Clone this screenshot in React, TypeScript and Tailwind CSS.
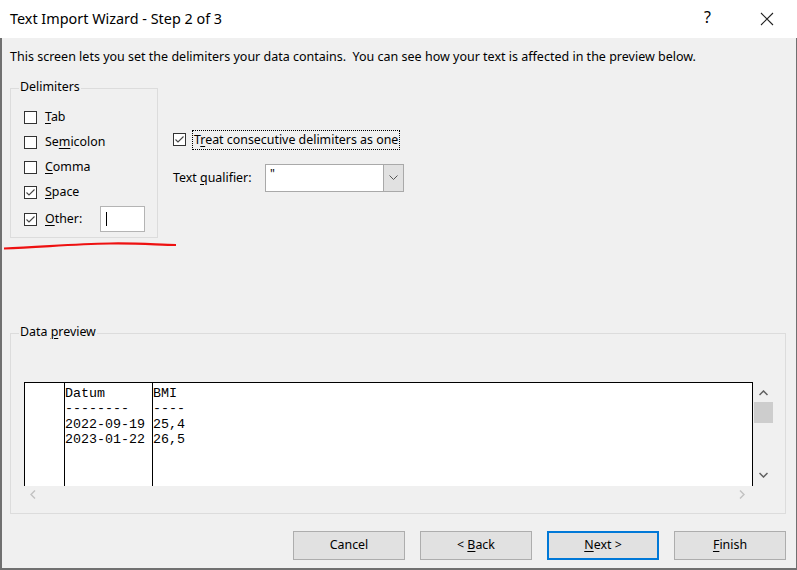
import React from "react";

const UI = { fontFamily: '"Noto Sans", "Open Sans", sans-serif' };
const MONO = { fontFamily: '"Liberation Mono", "Courier New", monospace' };

function Check({ checked }: { checked?: boolean }) {
  return (
    <div className="w-[13px] h-[13px] border border-[#333333] bg-white flex items-center justify-center shrink-0">
      {checked && (
        <svg width="11" height="11" viewBox="0 0 11 11">
          <polyline points="1.5,5.5 4,8 9.5,2.5" fill="none" stroke="#444" strokeWidth="1.1" />
        </svg>
      )}
    </div>
  );
}

function U({ children }: { children: React.ReactNode }) {
  return <span className="underline underline-offset-2 decoration-1">{children}</span>;
}

function CheckRow({ checked, children }: { checked?: boolean; children: React.ReactNode }) {
  return (
    <div className="flex items-center h-[25px]">
      <Check checked={checked} />
      <span className="ml-[8px] text-[12.4px] leading-none text-black">{children}</span>
    </div>
  );
}

function Btn({ children, primary }: { children: React.ReactNode; primary?: boolean }) {
  return (
    <div
      className={
        "w-[112px] h-[29px] bg-[#e1e1e1] flex items-center justify-center text-[12.4px] text-black " +
        (primary ? "border-2 border-[#0078d7]" : "border border-[#adadad]")
      }
    >
      <span className="whitespace-pre">{children}</span>
    </div>
  );
}

export default function App() {
  return (
    <div className="w-[797px] h-[570px] bg-[#f0f0f0] relative overflow-hidden" style={UI}>
      {/* Title bar */}
      <div className="h-[38px] bg-white flex items-center pl-[10px] relative">
        <span className="text-[14.4px] text-black leading-none">Text Import Wizard - Step 2 of 3</span>
        <span className="absolute left-[704px] top-[9px] text-[16px] text-black leading-none">?</span>
        <svg className="absolute left-[760px] top-[12px]" width="14" height="14" viewBox="0 0 14 14">
          <path d="M1 1 L13 13 M13 1 L1 13" stroke="#222" strokeWidth="1.1" />
        </svg>
      </div>

      {/* Body */}
      <div className="h-[532px] border-l-2 border-r border-b-2 border-[#707070] relative">
        <div className="pl-[8px] pt-[13px] text-[12.5px] text-black leading-none whitespace-pre">
          This screen lets you set the delimiters your data contains.  You can see how your text is affected in the preview below.
        </div>

        <div className="flex mt-[21px] ml-[8px]">
          {/* Delimiters group */}
          <div className="relative w-[148px] h-[150px] border border-[#dcdcdc] mt-[3px]">
            <span className="absolute left-[8px] -top-[8px] bg-[#f0f0f0] px-[1px] text-[12.4px] leading-none text-black">
              Delimiters
            </span>
            <div className="pl-[13px] pt-[16px] flex flex-col">
              <CheckRow><U>T</U>ab</CheckRow>
              <CheckRow>Se<U>m</U>icolon</CheckRow>
              <CheckRow><U>C</U>omma</CheckRow>
              <CheckRow checked><U>S</U>pace</CheckRow>
              <div className="flex items-center h-[29px]">
                <Check checked />
                <span className="ml-[8px] text-[12.4px] leading-none text-black w-[55px]"><U>O</U>ther:</span>
                <div className="w-[45px] h-[26px] bg-white border border-[#b4b4b4] flex items-center pl-[5px]">
                  <div className="w-[1px] h-[14px] bg-black" />
                </div>
              </div>
            </div>
          </div>

          {/* Right options */}
          <div className="ml-[15px] pt-[45px] flex flex-col">
            <div className="flex items-center">
              <Check checked />
              <span className="ml-[6px] text-[12.4px] leading-none text-black border border-dotted border-black px-[1px] py-[3px]">
                T<U>r</U>eat consecutive delimiters as one
              </span>
            </div>
            <div className="flex items-center mt-[14px]">
              <span className="text-[12.4px] leading-none text-black w-[92px]">Text <U>q</U>ualifier:</span>
              <div className="w-[139px] h-[28px] bg-white border border-[#a9a9a9] flex">
                <div className="flex-1 pl-[4px] pt-[3px] text-[12px] text-black leading-none">"</div>
                <div className="w-[20px] h-full bg-[#e1e1e1] border-l border-[#a9a9a9] flex items-center justify-center">
                  <svg width="9" height="6" viewBox="0 0 9 6">
                    <polyline points="0.5,0.5 4.5,4.5 8.5,0.5" fill="none" stroke="#555" strokeWidth="1" />
                  </svg>
                </div>
              </div>
            </div>
          </div>
        </div>

        {/* Data preview group */}
        <div className="relative ml-[8px] mt-[95px] w-[776px] h-[181px] border border-[#dcdcdc]">
          <span className="absolute left-[8px] -top-[8px] bg-[#f0f0f0] px-[1px] text-[12.4px] leading-none text-black">
            Data <U>p</U>review
          </span>
          <div className="ml-[13px] mt-[48px] flex">
            <div className="flex flex-col">
              <div className="w-[729px] h-[104px] bg-white border-t border-l border-r border-black flex" style={MONO}>
                <div className="w-[40px] border-r border-black" />
                <div className="w-[88px] border-r border-black text-[13.33px] leading-[15.6px] text-black pt-[3px] whitespace-pre">
                  {"Datum\n--------\n2022-09-19\n2023-01-22"}
                </div>
                <div className="text-[13.33px] leading-[15.6px] text-black pt-[3px] whitespace-pre">
                  {"BMI\n----\n25,4\n26,5"}
                </div>
              </div>
              <div className="h-[18px] flex items-center justify-between px-[6px]">
                <svg width="6" height="9" viewBox="0 0 6 9">
                  <polyline points="5,0.5 1,4.5 5,8.5" fill="none" stroke="#c2c2c2" strokeWidth="1.5" />
                </svg>
                <svg className="mr-[2px]" width="6" height="9" viewBox="0 0 6 9">
                  <polyline points="1,0.5 5,4.5 1,8.5" fill="none" stroke="#c2c2c2" strokeWidth="1.5" />
                </svg>
              </div>
            </div>
            <div className="w-[20px] h-[104px] flex flex-col items-center">
              <div className="h-[20px] flex items-center justify-center pt-[2px]">
                <svg width="9" height="6" viewBox="0 0 9 6">
                  <polyline points="0.5,5 4.5,1 8.5,5" fill="none" stroke="#606060" strokeWidth="1.5" />
                </svg>
              </div>
              <div className="w-[19px] h-[21px] bg-[#cdcdcd] ml-[1px]" />
              <div className="flex-1" />
              <div className="h-[20px] flex items-center justify-center pb-[2px]">
                <svg width="9" height="6" viewBox="0 0 9 6">
                  <polyline points="0.5,1 4.5,5 8.5,1" fill="none" stroke="#606060" strokeWidth="1.5" />
                </svg>
              </div>
            </div>
          </div>
        </div>

        {/* Buttons */}
        <div className="flex justify-end pr-[10px] mt-[17px]">
          <div className="flex gap-[15px]">
            <Btn>Cancel</Btn>
            <Btn>{"< "}<U>B</U>ack</Btn>
            <Btn primary><U>N</U>ext &gt;</Btn>
            <Btn><U>F</U>inish</Btn>
          </div>
        </div>
      </div>

      {/* Red annotation line */}
      <svg className="absolute left-0 top-0 pointer-events-none" width="797" height="570">
        <path d="M4 248.5 C 40 247.5, 70 244, 110 243.5 C 140 243, 160 245, 176 245" fill="none" stroke="#ee1111" strokeWidth="2.2" />
      </svg>
    </div>
  );
}
